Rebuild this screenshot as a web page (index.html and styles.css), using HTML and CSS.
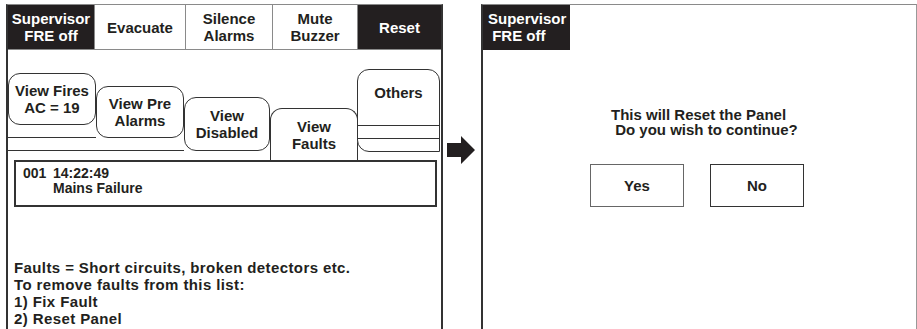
FILE: index.html
```html
<!DOCTYPE html>
<html lang="en">
    <head>
        <meta charset="UTF-8" />
        <title>Reset Panel</title>
        <link rel="stylesheet" href="styles.css">
    </head>
    <body>
        <div class="screens">
            <div class="panel panel-main">
                <div class="header">
                    <div class="hbtn dark">Supervisor<br>FRE off</div>
                    <div class="hbtn">Evacuate</div>
                    <div class="hbtn">Silence<br>Alarms</div>
                    <div class="hbtn">Mute<br>Buzzer</div>
                    <div class="hbtn dark">Reset</div>
                </div>
                <div class="tabs">
                    <div class="tabcol col-fires">
                        <div class="tab">View Fires<br>AC = 19</div>
                        <div class="rule"></div>
                        <div class="rule"></div>
                    </div>
                    <div class="tabcol col-pre">
                        <div class="tab">View Pre<br>Alarms</div>
                        <div class="rule"></div>
                    </div>
                    <div class="tabcol col-disabled">
                        <div class="tab">View<br>Disabled</div>
                    </div>
                    <div class="tabcol col-faults">
                        <div class="tab active">View<br>Faults</div>
                    </div>
                    <div class="tabcol col-others">
                        <div class="tab others">
                            <div class="others-label">Others</div>
                            <div class="others-rule"></div>
                        </div>
                    </div>
                </div>
                <div class="list">
                    <div>001</div>
                    <div>14:22:49<br>Mains Failure</div>
                </div>
                <div class="help">
                    Faults = Short circuits, broken detectors etc.<br>
                    To remove faults from this list:<br>
                    1) Fix Fault<br>
                    2) Reset Panel
                </div>
            </div>
            <div class="arrow">
                <svg width="28" height="28" viewBox="0 0 28 28">
                    <path d="M0 7 H14 V0 L28 14 L14 28 V21 H0 Z" fill="#231f20" />
                </svg>
            </div>
            <div class="panel panel-dialog">
                <div class="badge">Supervisor<br>&nbsp;FRE off</div>
                <div class="message">This will Reset the Panel
 Do you wish to continue?</div>
                <div class="choices">
                    <div class="choice yes">Yes</div>
                    <div class="choice">No</div>
                </div>
            </div>
        </div>
    </body>
</html>
```

FILE: styles.css
```css
* {
    box-sizing: border-box;
}
body {
    margin: 0;
    background-color: white;
    color: #231f20;
    font-family: "Liberation Sans", Arial, sans-serif;
    font-weight: bold;
}
.screens {
    display: flex;
    height: 329px;
    padding: 4px 0 0 6px;
    overflow: hidden;
}
.panel {
    display: flex;
    flex-direction: column;
    height: 100%;
    border-top: 1px solid #8a8a8a;
    border-left: 2px solid #333;
}
.panel-main {
    width: 437px;
    border-right: 2px solid #333;
}
.header {
    display: grid;
    grid-template-columns: 86px 91px 87px 85px 84px;
    height: 45px;
    border-bottom: 1px solid #8a8a8a;
}
.hbtn {
    display: flex;
    align-items: center;
    justify-content: center;
    text-align: center;
    font-size: 15px;
    line-height: 17px;
    border-left: 1px solid #8a8a8a;
}
.hbtn:first-child {
    border-left: none;
}
.dark {
    background-color: #231f20;
    color: white;
}
.tabs {
    display: grid;
    grid-template-columns: 88px 88px 86px 87px 84px;
    height: 110px;
    align-items: start;
}
.tabcol {
    display: flex;
    flex-direction: column;
}
.tab {
    display: flex;
    align-items: center;
    justify-content: center;
    text-align: center;
    font-size: 15px;
    line-height: 17px;
    border: 1px solid #333;
    border-radius: 12px;
    background-color: white;
}
.rule {
    height: 13px;
    border-bottom: 1px solid #333;
}
.col-fires {
    padding-top: 23px;
}
.col-fires .tab {
    height: 52px;
}
.col-pre {
    padding-top: 36px;
}
.col-pre .tab {
    height: 52px;
}
.col-disabled {
    padding-top: 47px;
}
.col-disabled .tab {
    height: 54px;
}
.col-faults {
    padding-top: 58px;
}
.tab.active {
    height: 52px;
    border-bottom: none;
    border-radius: 12px 12px 0 0;
    margin-right: -1px;
}
.col-others {
    padding-top: 19px;
}
.tab.others {
    display: flex;
    flex-direction: column;
    align-items: stretch;
    justify-content: flex-start;
    height: 83px;
    margin-right: 1px;
    border-radius: 12px 12px 0 12px;
}
.others-label {
    height: 56px;
    padding-top: 14px;
    border-bottom: 1px solid #333;
}
.others-rule {
    height: 13px;
    border-bottom: 1px solid #333;
}
.list {
    display: grid;
    grid-template-columns: 30px auto;
    height: 47px;
    margin: 0 4px 0 6px;
    padding: 4px 0 0 7px;
    border: 2px solid #333;
    font-size: 14px;
    line-height: 15px;
}
.help {
    margin-top: auto;
    padding: 0 0 2px 6px;
    font-size: 15px;
    line-height: 17px;
    letter-spacing: 0.4px;
}
.arrow {
    width: 38px;
    padding: 132px 0 0 4px;
}
.panel-dialog {
    flex: 1;
    border-right: 1px solid #999;
}
.badge {
    width: 87px;
    height: 45px;
    padding: 5px 0 0 5px;
    font-size: 15px;
    line-height: 17px;
    background-color: #231f20;
    color: white;
}
.message {
    margin: 57px 0 0 128px;
    font-size: 15px;
    line-height: 15px;
    white-space: pre;
}
.choices {
    display: flex;
    gap: 26px;
    margin: 27px 0 0 107px;
}
.choice {
    display: flex;
    align-items: center;
    justify-content: center;
    width: 94px;
    height: 43px;
    border: 1.5px solid #333;
    font-size: 15px;
}
.choice.yes {
    border-color: #666;
}
```
